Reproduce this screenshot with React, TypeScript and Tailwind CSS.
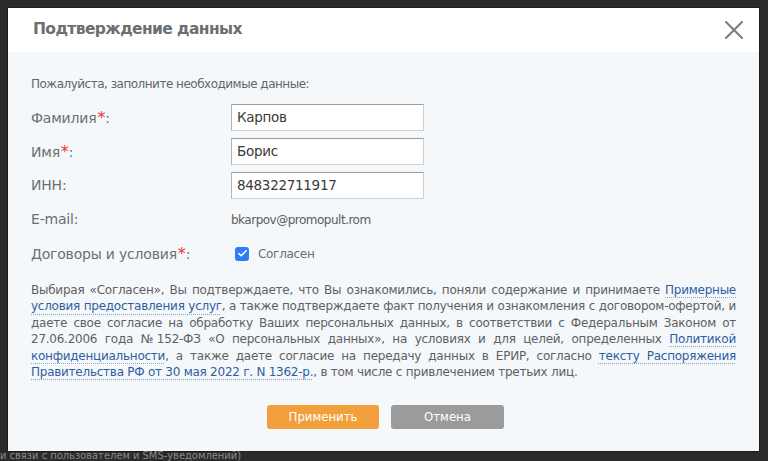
import { Check } from "lucide-react";

const font = "font-['DejaVu_Sans',Verdana,sans-serif]";

const fields = [
  { label: "Фамилия", required: true, value: "Карпов" },
  { label: "Имя", required: true, value: "Борис" },
  { label: "ИНН", required: false, value: "848322711917" },
];

function Link({ children }: { children: React.ReactNode }) {
  return (
    <a className="text-[#2d5f9f] underline decoration-dotted decoration-[#8fa6c4] underline-offset-[3px]">
      {children}
    </a>
  );
}

export default function App() {
  return (
    <div className={`w-[768px] h-[461px] overflow-hidden bg-[#2b2b2b] ${font}`}>
      {/* Modal */}
      <div className="ml-[8px] mt-[8px] w-[751px] h-[443px] flex flex-col bg-[#f5f8fa] shadow-[0_0_0_1px_#1e1e1e]">
        {/* Header */}
        <div className="h-[44px] shrink-0 bg-white flex items-center justify-between pl-[25px] pr-[16px]">
          <h2 className="text-[15.5px] font-bold text-[#6b6f72] tracking-[-0.6px]">
            Подтверждение данных
          </h2>
          <svg width="18" height="18" viewBox="0 0 18 18" className="mt-[-1px]">
            <path d="M1 1 L17 17 M17 1 L1 17" stroke="#797c7f" strokeWidth="2" strokeLinecap="round" />
          </svg>
        </div>

        {/* Body */}
        <div className="flex-1 pt-[24px] px-[23px] pb-[22px] flex flex-col">
          <p className="text-[12px] leading-[16px] text-[#62666a] tracking-[-0.5px]">
            Пожалуйста, заполните необходимые данные:
          </p>

          {/* Form */}
          <div className="mt-[12px] flex flex-col gap-[7px]">
            {fields.map((f) => (
              <div key={f.label} className="flex items-center h-[27px]">
                <div className="w-[200px] text-[14px] text-[#6b6f72] tracking-[-0.2px]">
                  {f.label}
                  {f.required && <span className="text-[#e8372c] text-[16px] ml-[1px]">*</span>}:
                </div>
                <div className="w-[193px] h-[27px] bg-white border border-[#cfcfcf] border-t-[#9d9d9d] border-l-[#b5b5b5] flex items-center px-[5px] text-[13.5px] tracking-[-0.3px] text-[#3a3a3a]">
                  {f.value}
                </div>
              </div>
            ))}
            <div className="flex items-center h-[27px]">
              <div className="w-[200px] text-[14px] text-[#6b6f72] tracking-[-0.2px]">E-mail:</div>
              <div className="text-[12px] tracking-[-0.5px] text-[#5a5d60]">bkarpov@promopult.rom</div>
            </div>
            <div className="flex items-center h-[27px]">
              <div className="w-[200px] text-[14px] text-[#6b6f72] tracking-[-0.2px]">
                Договоры и условия<span className="text-[#e8372c] text-[16px] ml-[1px]">*</span>:
              </div>
              <div className="ml-[4px] w-[14px] h-[14px] rounded-[3px] bg-[#2f7cf6] flex items-center justify-center">
                <Check className="w-[11px] h-[11px] text-white" strokeWidth={3.5} />
              </div>
              <span className="ml-[9px] text-[12px] tracking-[-0.3px] text-[#6b6f72]">Согласен</span>
            </div>
          </div>

          {/* Agreement text */}
          <div className="mt-[15px] text-[12px] leading-[16.4px] text-[#5d6164] tracking-[-0.25px]">
            <p className="text-justify [text-align-last:justify] whitespace-nowrap">
              Выбирая «Согласен», Вы подтверждаете, что Вы ознакомились, поняли содержание и принимаете <Link>Примерные</Link>
            </p>
            <p className="text-justify [text-align-last:justify]">
              <Link>условия предоставления услуг</Link>, а также подтверждаете факт получения и ознакомления с договором-офертой, и
            </p>
            <p className="text-justify [text-align-last:justify]">
              даете свое согласие на обработку Ваших персональных данных, в соответствии с Федеральным Законом от
            </p>
            <p className="text-justify [text-align-last:justify]">
              27.06.2006 года №152-ФЗ «О персональных данных», на условиях и для целей, определенных <Link>Политикой</Link>
            </p>
            <p className="text-justify [text-align-last:justify]">
              <Link>конфиденциальности</Link>, а также даете согласие на передачу данных в ЕРИР, согласно <Link>тексту Распоряжения</Link>
            </p>
            <p>
              <Link>Правительства РФ от 30 мая 2022 г. N 1362-р.</Link>, в том числе с привлечением третьих лиц.
            </p>
          </div>

          {/* Buttons */}
          <div className="mt-auto pl-[4px] flex justify-center gap-[12px] font-['DejaVu_Sans_Condensed','DejaVu_Sans',sans-serif]">
            <button className="w-[112px] h-[24px] rounded-[3px] bg-[#f2a03c] text-white text-[13px]">
              Применить
            </button>
            <button className="w-[113px] h-[24px] rounded-[3px] bg-[#9b9b9b] text-white text-[13px]">
              Отмена
            </button>
          </div>
        </div>
      </div>

      {/* Page behind */}
      <div className="text-[11px] leading-[10px] text-[#8a8a8a] font-['DejaVu_Sans_Condensed','DejaVu_Sans',sans-serif]">
        и связи с пользователем и SMS-уведомлений)
      </div>
    </div>
  );
}
